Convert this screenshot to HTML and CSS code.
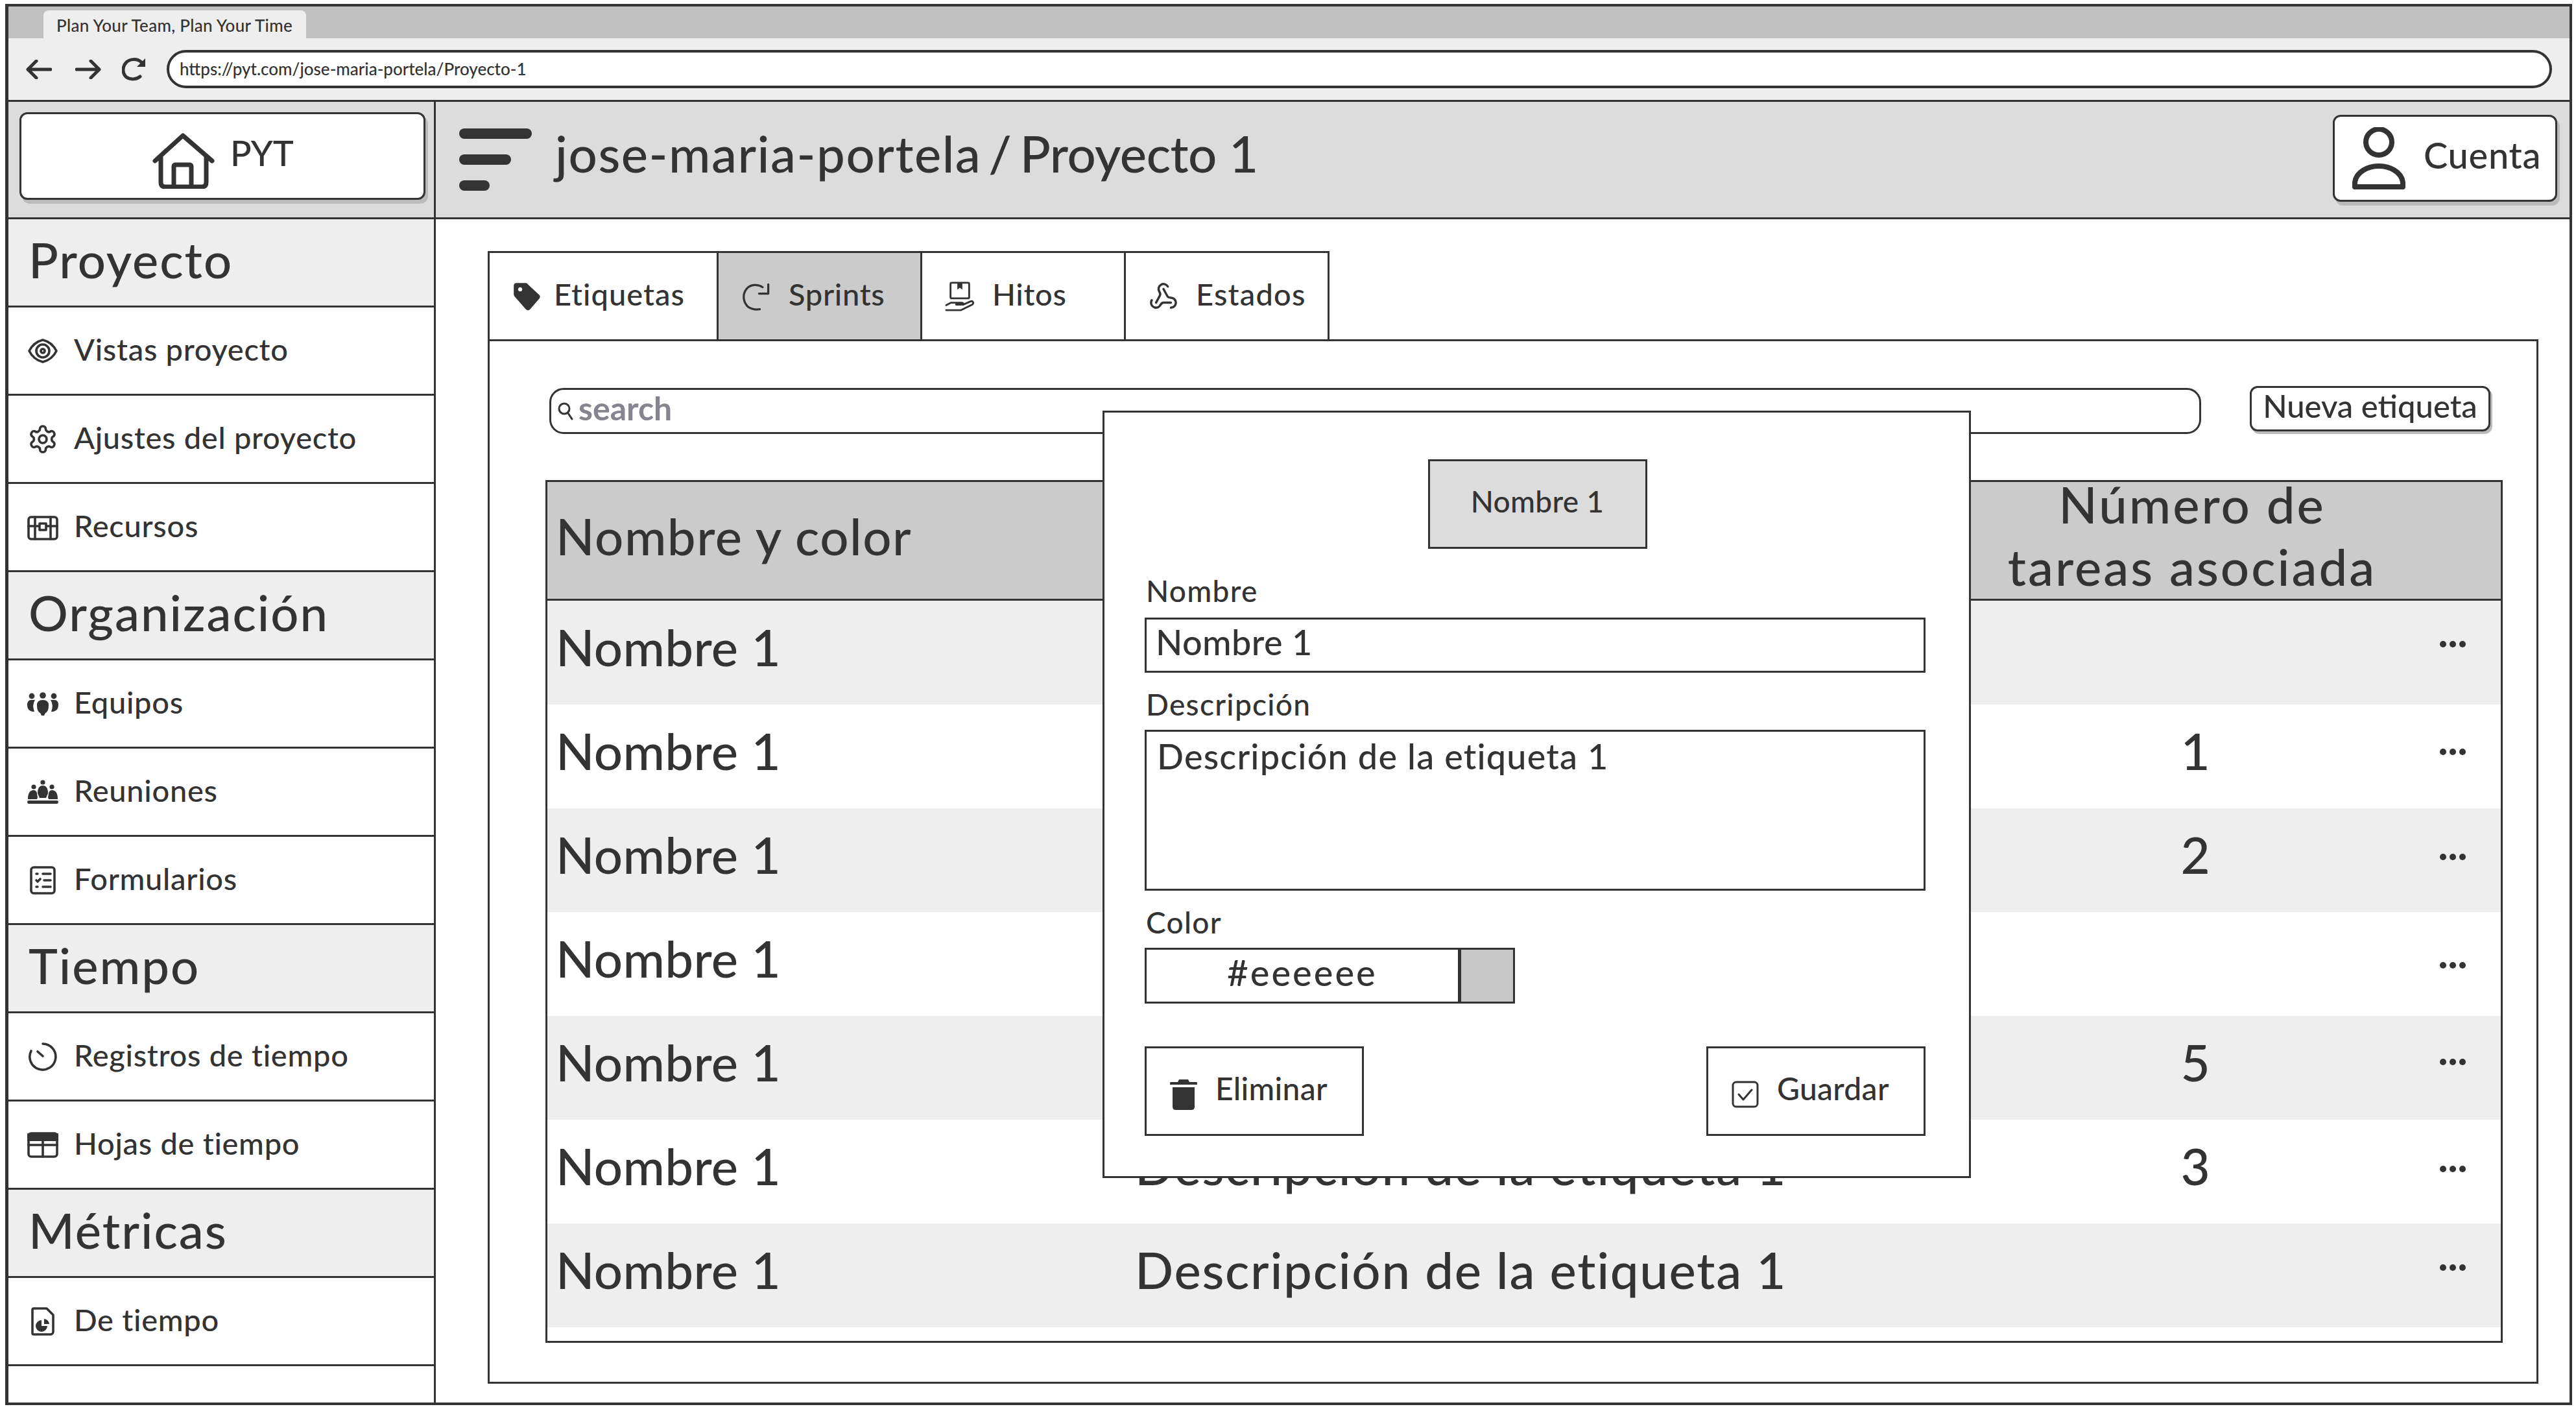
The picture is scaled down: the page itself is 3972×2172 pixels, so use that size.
FILE: index.html
```html
<!DOCTYPE html>
<html lang="es">
<head>
<meta charset="utf-8">
<title>Plan Your Team, Plan Your Time</title>
<link rel="stylesheet" href="styles.css">
</head>
<body>
<div class="window">
  <div class="tabstrip"><div class="browser-tab">Plan Your Team, Plan Your Time</div></div>
  <div class="toolbar">
    <svg class="nav-back" viewBox="0 0 40 30"><path d="M38 15H3M16 2 3 15l13 13"/></svg>
    <svg class="nav-fwd" viewBox="0 0 40 30"><path d="M2 15h35M24 2l13 13-13 13"/></svg>
    <svg class="nav-reload" viewBox="0 0 38 36"><path d="M30 7C24 1 12 1 6 8c-6 7-5 17 1 22 6 4 15 4 21-1"/><path class="solid" d="M36 1v13H23z"/></svg>
    <div class="address">https://pyt.com/jose-maria-portela/Proyecto-1</div>
  </div>
  <div class="app">
    <div class="logo-cell">
      <div class="logo-btn">
        <svg class="home" viewBox="0 0 96 86"><path d="M4 43 47 4l45 39M13 35v41q0 7 7 7h56q7 0 7-7V35M33 83V52q0-3 3-3h21q3 0 3 3v31"/></svg>
        <span class="logo-text">PYT</span>
      </div>
    </div>
    <div class="titlebar">
      <div class="burger"><i class="b1"></i><i class="b2"></i><i class="b3"></i></div>
      <div class="crumb"><span class="crumb-org">jose-maria-portela</span><span class="crumb-sep">/</span><span class="crumb-proj">Proyecto 1</span></div>
      <div class="account">
        <svg class="user" viewBox="0 0 84 96"><circle cx="42" cy="23" r="20"/><path d="M5 92v-7c2-16 20-25 37-25s35 9 37 25v7z"/></svg>
        <span>Cuenta</span>
      </div>
    </div>
    <nav class="sidebar">
      <div class="sec">Proyecto</div>
      <div class="item"><svg class="ico" viewBox="0 0 24 24"><path d="M1.500 12C4 7 8 4.500 12 3.500 16 4.500 20 7 22.500 12 20 17 16 19.500 12 20.500 8 19.500 4 17 1.500 12z"/><circle cx="12" cy="12" r="5"/><circle cx="12" cy="12" r="1.500"/></svg><span>Vistas proyecto</span></div>
      <div class="item"><svg class="ico" viewBox="0 0 24 24"><path d="M12.220 2h-.44a2 2 0 0 0-2 2v.18a2 2 0 0 1-1 1.730l-.43.25a2 2 0 0 1-2 0l-.15-.08a2 2 0 0 0-2.730.73l-.22.38a2 2 0 0 0 .73 2.730l.15.1a2 2 0 0 1 1 1.720v.51a2 2 0 0 1-1 1.740l-.15.09a2 2 0 0 0-.73 2.730l.22.38a2 2 0 0 0 2.730.73l.15-.08a2 2 0 0 1 2 0l.43.25a2 2 0 0 1 1 1.730V20a2 2 0 0 0 2 2h.44a2 2 0 0 0 2-2v-.18a2 2 0 0 1 1-1.730l.43-.25a2 2 0 0 1 2 0l.15.08a2 2 0 0 0 2.730-.73l.22-.39a2 2 0 0 0-.73-2.730l-.15-.08a2 2 0 0 1-1-1.740v-.5a2 2 0 0 1 1-1.740l.15-.09a2 2 0 0 0 .73-2.730l-.22-.38a2 2 0 0 0-2.730-.73l-.15.08a2 2 0 0 1-2 0l-.43-.25a2 2 0 0 1-1-1.730V4a2 2 0 0 0-2-2z"/><circle cx="12" cy="12" r="3"/></svg><span>Ajustes del proyecto</span></div>
      <div class="item"><svg class="ico" viewBox="0 0 24 24"><rect x="1" y="4" width="22" height="17" rx="2"/><path d="M1 11h8M15 11h8M6 4v17M18 4v17"/><rect x="9.500" y="9" width="5" height="5"/></svg><span>Recursos</span></div>
      <div class="sec">Organización</div>
      <div class="item"><svg class="ico" viewBox="0 0 24 24"><g class="solid"><circle cx="3.500" cy="6" r="2.200"/><circle cx="12" cy="5.500" r="2.400"/><circle cx="20.500" cy="6" r="2.200"/><path d="M0 13q0-4 3-4h3q-2.500 4-.5 9H4q-4-1-4-5zM24 13q0-4-3-4h-3q2.500 4 .5 9H20q4-1 4-5zM7.500 13q0-4 4.500-4t4.500 4q0 5-2.500 6l-1 2h-2l-1-2q-2.500-1-2.500-6z"/></g></svg><span>Equipos</span></div>
      <div class="item"><svg class="ico" viewBox="0 0 24 24"><g class="solid"><circle cx="12" cy="4.500" r="1.800"/><circle cx="5" cy="8" r="1.800"/><circle cx="19" cy="8" r="1.800"/><path d="M8 13q0-6 4-6t4 6l-1.500 3.500h-5zM.5 17.500q0-7 4.500-7 1.500 0 2.300 1.500L8 16l-.5 1.500zM23.500 17.500q0-7-4.500-7-1.500 0-2.300 1.500L16 16l.5 1.500z"/><rect y="18.500" width="24" height="2.500" rx="1.200"/></g></svg><span>Reuniones</span></div>
      <div class="item"><svg class="ico" viewBox="0 0 24 24"><rect x="3" y="2" width="18" height="20" rx="2"/><path d="M7 7h1M12 7h6M7 12l1 1 2-2M13 12h5M7 17h1M12 17h6"/></svg><span>Formularios</span></div>
      <div class="sec">Tiempo</div>
      <div class="item"><svg class="ico" viewBox="0 0 24 24"><path d="M12 2a10 10 0 1 1-9 5.500"/><path d="M8 8l4 3.500"/></svg><span>Registros de tiempo</span></div>
      <div class="item"><svg class="ico" viewBox="0 0 24 24"><rect x="1" y="3" width="22" height="18" rx="2"/><path class="thick" d="M1 6h22"/><path d="M1 12h22M12 7v14"/></svg><span>Hojas de tiempo</span></div>
      <div class="sec">Métricas</div>
      <div class="item"><svg class="ico" viewBox="0 0 24 24"><path d="M5 2h10l5 5v13a2 2 0 0 1-2 2H5a1 1 0 0 1-1-1V3a1 1 0 0 1 1-1z"/><path class="solid" d="M11 11v4.500h4.500A4.500 4.500 0 1 1 11 11zM13 10a4.500 4.500 0 0 1 4 4h-4z"/></svg><span>De tiempo</span></div>
    </nav>
    <main class="main">
      <div class="tabs">
        <div class="tab tab-a"><svg class="tab-ico" viewBox="0 0 42 42"><path class="solid" fill-rule="evenodd" d="M2 6q0-4 4-4h13q2 0 3 2l16 15q2 2 0 5L25 39q-3 3-6 0L4 22q-2-2-2-4zM11 8a3 3 0 1 0 .01 0z"/></svg><span>Etiquetas</span></div>
        <div class="tab tab-b active"><svg class="tab-ico" viewBox="0 0 42 42"><path d="M30 8C23 3 12 4 7 11c-6 8-4 19 3 25 5 3 10 4 16 3"/><path d="M38 4v13H25"/></svg><span>Sprints</span></div>
        <div class="tab tab-c"><svg class="tab-ico" viewBox="0 0 48 48"><rect x="9" y="2" width="30" height="25" rx="2"/><path class="solid" d="M20 2h8v11l-4-3-4 3z"/><path d="M2 46h24l18-9c3-2 1-7-3-5l-11 5H18M2 38l8-4h16q4 0 4 3"/></svg><span>Hitos</span></div>
        <div class="tab tab-d"><svg class="tab-ico" viewBox="0 0 24 24"><path d="M18 16.980h-5.990c-1.100 0-1.950.94-2.480 1.900A4 4 0 0 1 2 17c.01-.7.2-1.400.57-2"/><path d="m6 17 3.130-5.780c.53-.97.1-2.180-.5-3.100a4 4 0 1 1 6.890-4.060"/><path d="m12 6 3.130 5.730C15.660 12.700 16.900 13 18 13a4 4 0 0 1 0 8"/></svg><span>Estados</span></div>
      </div>
      <section class="panel">
        <div class="panel-top">
          <div class="search">
            <svg class="search-ico" viewBox="0 0 24 30"><circle cx="10" cy="11" r="8"/><path d="m16 18 6 9"/></svg>
            <span>search</span>
          </div>
          <div class="new-btn">Nueva etiqueta</div>
        </div>
        <div class="table">
          <div class="row head"><div class="c1">Nombre y color</div><div class="c2">Descripción</div><div class="c3">Número de<br>tareas asociada</div><div class="c4"></div></div>
          <div class="row odd r1"><div class="c1">Nombre 1</div><div class="c2">Descripción de la etiqueta 1</div><div class="c3"></div><div class="c4"><span class="dots"><i></i><i></i><i></i></span></div></div>
          <div class="row r2"><div class="c1">Nombre 1</div><div class="c2">Descripción de la etiqueta 1</div><div class="c3">1</div><div class="c4"><span class="dots"><i></i><i></i><i></i></span></div></div>
          <div class="row odd r3"><div class="c1">Nombre 1</div><div class="c2">Descripción de la etiqueta 1</div><div class="c3">2</div><div class="c4"><span class="dots"><i></i><i></i><i></i></span></div></div>
          <div class="row r4"><div class="c1">Nombre 1</div><div class="c2">Descripción de la etiqueta 1</div><div class="c3"></div><div class="c4"><span class="dots"><i></i><i></i><i></i></span></div></div>
          <div class="row odd r5"><div class="c1">Nombre 1</div><div class="c2">Descripción de la etiqueta 1</div><div class="c3">5</div><div class="c4"><span class="dots"><i></i><i></i><i></i></span></div></div>
          <div class="row r6"><div class="c1">Nombre 1</div><div class="c2">Descripción de la etiqueta 1</div><div class="c3">3</div><div class="c4"><span class="dots"><i></i><i></i><i></i></span></div></div>
          <div class="row odd r7"><div class="c1">Nombre 1</div><div class="c2">Descripción de la etiqueta 1</div><div class="c3"></div><div class="c4"><span class="dots"><i></i><i></i><i></i></span></div></div>
        </div>
      </section>
      <div class="modal">
        <div class="chip">Nombre 1</div>
        <div class="label label-first">Nombre</div>
        <div class="field field-name">Nombre 1</div>
        <div class="label">Descripción</div>
        <div class="field field-desc">Descripción de la etiqueta 1</div>
        <div class="label">Color</div>
        <div class="color">
          <div class="color-value">#eeeeee</div>
          <div class="color-swatch"></div>
        </div>
        <div class="actions">
          <div class="action act-del"><svg class="trash" viewBox="0 0 42 48"><path class="solid" d="M14 1h14l2 4h11q1 0 1 2v2H0V7q0-2 1-2h11zM4 13h34v30q0 5-5 5H9q-5 0-5-5z"/></svg><span>Eliminar</span></div>
          <div class="action act-save"><svg class="check" viewBox="0 0 42 42"><rect x="2" y="2" width="38" height="38" rx="5"/><path d="m11 21 7 8 13-15"/></svg><span>Guardar</span></div>
        </div>
      </div>
    </main>
  </div>
</div>
</body>
</html>
```
FILE: styles.css
```css
* { box-sizing: border-box; }
html, body { margin: 0; padding: 0; background: #fff; }
body { font-family: Lato, "Noto Sans", sans-serif; font-weight: 500; color: #333; overflow: hidden; }
svg { display: block; flex: none; fill: none; stroke: #333; stroke-linecap: round; stroke-linejoin: round; }
svg .solid { fill: #333; stroke: none; }

.window { width: 3958px; height: 2160px; margin: 6px 6px 6px 8px; border: 4px solid #333; border-left-width: 5px; display: flex; flex-direction: column; background: #fff; }

.tabstrip { height: 49px; flex: none; background: #c0c0c0; padding: 6px 0 0 54px; }
.browser-tab { width: 405px; height: 43px; background: #eee; border-radius: 8px 8px 0 0; font-size: 26px; letter-spacing: 0.300px; line-height: 46px; padding-left: 20px; white-space: nowrap; }

.toolbar { height: 95px; flex: none; background: #eee; display: flex; align-items: center; padding-left: 27px; padding-right: 27px; }
.nav-back { width: 40px; height: 30px; stroke-width: 5; }
.nav-fwd { width: 40px; height: 30px; stroke-width: 5; margin-left: 36px; }
.nav-reload { width: 38px; height: 36px; stroke-width: 5; margin-left: 32px; }
.address { flex: 1; height: 59px; margin-left: 31px; background: #fff; border: 4px solid #333; border-radius: 30px; font-size: 26px; line-height: 51px; padding-left: 16px; }

.app { flex: 1; display: grid; grid-template-columns: 659px 1fr; grid-template-rows: 184px 1fr; min-height: 0; }

.logo-cell { background: #dcdcdc; border-top: 3px solid #333; border-bottom: 3px solid #333; border-right: 3px solid #333; padding: 16px 13px 0 17px; }
.logo-btn { height: 135px; background: #fff; border: 3px solid #333; border-radius: 12px; box-shadow: 4px 6px 0 #bbb; display: flex; align-items: center; padding-left: 202px; gap: 24px; }
.home { width: 96px; height: 86px; stroke-width: 7; margin-top: 14px; }
.logo-text { font-size: 54px; line-height: 1; margin-top: -10px; }

.titlebar { background: #dcdcdc; border-top: 3px solid #333; border-bottom: 3px solid #333; display: flex; align-items: center; padding-left: 36px; padding-right: 19px; }
.burger { display: flex; flex-direction: column; gap: 24px; width: 112px; flex: none; }
.burger i { display: block; height: 16px; background: #333; border-radius: 8px; }
.burger .b1 { width: 112px; }
.burger .b2 { width: 80px; }
.burger .b3 { width: 47px; }
.crumb { font-size: 78px; line-height: 1; margin-left: 36px; flex: 1; white-space: nowrap; margin-top: -20px; display: flex; }
.crumb-org { letter-spacing: 1.500px; }
.crumb-sep { margin: 0 13px 0 11px; }
.crumb-proj { letter-spacing: -0.500px; }
.account { width: 346px; height: 134px; margin-top: -5px; background: #fff; border: 3px solid #333; border-radius: 12px; box-shadow: 4px 6px 0 #bbb; display: flex; align-items: center; padding-left: 26px; gap: 27px; font-size: 56px; letter-spacing: 0.700px; }
.account span { margin-top: -10px; }
.user { width: 84px; height: 96px; stroke-width: 8; }

.sidebar { border-right: 3px solid #333; display: flex; flex-direction: column; }
.sec, .item { height: 136px; flex: none; border-bottom: 3px solid #333; display: flex; align-items: center; }
.sec { background: #eee; font-size: 76px; letter-spacing: 2px; padding-left: 31px; padding-bottom: 10px; }
.item { font-size: 47px; letter-spacing: 0.700px; padding-left: 29px; gap: 24px; }
.item span { margin-top: -6px; }
.ico { width: 48px; height: 48px; stroke-width: 1.800; }
.ico .thick { stroke-width: 6; }

.main { position: relative; display: flex; flex-direction: column; padding: 49px 48px 29px 80px; min-width: 0; }
.tabs { display: flex; height: 136px; flex: none; }
.tab { height: 136px; background: #fff; border: 3px solid #333; border-bottom-width: 0; border-left-width: 0; display: flex; align-items: center; gap: 27px; padding-left: 35px; font-size: 47px; letter-spacing: 0.700px; }
.tab span { margin-top: -8px; }
.tab-a { width: 356px; border-left-width: 3px; gap: 18px; letter-spacing: 1px; }
.tab-b { width: 314px; }
.tab-c { width: 314px; }
.tab-d { width: 314px; letter-spacing: 1.200px; }
.tab.active { background: #cbcbcb; }
.tab-ico { width: 46px; height: 46px; stroke-width: 3; }
.tab-d .tab-ico { stroke-width: 1.800; }

.panel { flex: 1; border: 3px solid #333; padding: 69px 52px 0 86px; min-height: 0; }
.panel-top { display: flex; align-items: flex-start; height: 75px; gap: 75px; padding-right: 19px; }
.search { flex: 1; height: 71px; margin-top: 3px; margin-left: 6px; border: 3px solid #333; border-radius: 22px; background: #fff; display: flex; align-items: center; padding-left: 10px; gap: 8px; font-size: 50px; color: #85858f; font-weight: 700; }
.search span { margin-top: -10px; }
.search-ico { width: 24px; height: 30px; stroke-width: 3; }
.new-btn { width: 371px; height: 70px; background: #fff; border: 3px solid #333; border-radius: 12px; box-shadow: 3px 4px 0 #bbb; font-size: 49px; line-height: 54px; text-align: center; white-space: nowrap; }

.table { margin-top: 70px; border: 3px solid #333; padding-bottom: 21px; }
.row { display: grid; grid-template-columns: 888px 1358px 590px 1fr; height: 160px; align-items: center; font-size: 78px; white-space: nowrap; }
.row.odd { background: #eee; }
.row.head { height: 183px; background: #cbcbcb; border-bottom: 3px solid #333; }
.c1 { padding-left: 13px; margin-top: -18px; letter-spacing: 0.300px; }
.c2 { padding-left: 18px; margin-top: -18px; letter-spacing: 1.700px; }
.c3 { text-align: center; margin-top: -18px; }
.head .c1 { letter-spacing: 1.500px; margin-top: -14px; }
.head .c2 { margin-top: -14px; }
.head .c3 { line-height: 96px; letter-spacing: 3px; margin-top: -16px; padding-right: 10px; }
.c4 { padding-left: 82px; }
.dots { display: flex; gap: 5px; width: 40px; }
.dots i { width: 10px; height: 10px; border-radius: 50%; background: #333; flex: none; }
.r1 .dots { transform: translateY(-13px); }
.r2 .dots { transform: translateY(-7px); }
.r3 .dots { transform: translateY(-5px); }
.r4 .dots { transform: translateY(2px); }
.r5 .dots { transform: translateY(-9px); }
.r6 .dots { transform: translateY(-4px); }
.r7 .dots { transform: translateY(-12px); }

.modal { position: absolute; left: 1028px; top: 295px; width: 1339px; height: 1183px; background: #fff; border: 3px solid #333; padding: 72px 67px 0 62px; display: flex; flex-direction: column; }
.chip { align-self: center; width: 338px; height: 138px; margin-left: 7px; background: #dcdcdc; border: 3px solid #333; font-size: 46px; letter-spacing: 0.300px; line-height: 124px; text-align: center; }
.label { font-size: 46px; line-height: 46px; letter-spacing: 1.300px; margin-top: 26px; margin-bottom: 16px; padding-left: 2px; }
.label-first { margin-top: 42px; margin-bottom: 18px; }
.field { border: 3px solid #333; background: #fff; font-size: 54px; padding-left: 14px; }
.field-name { height: 85px; line-height: 70px; letter-spacing: 0.400px; }
.field-desc { height: 248px; line-height: 76px; padding-left: 16px; letter-spacing: 1.200px; }
.color { display: flex; height: 86px; width: 571px; border: 3px solid #333; }
.color-value { width: 485px; font-size: 56px; line-height: 70px; letter-spacing: 3px; text-align: center; border-right: 5px solid #333; }
.color-swatch { flex: 1; background: #c6c6c6; }
.actions { display: flex; justify-content: space-between; margin-top: 66px; }
.action { width: 338px; height: 138px; border: 3px solid #333; display: flex; align-items: center; font-size: 48px; letter-spacing: 0.300px; padding-left: 36px; gap: 28px; }
.action span { margin-top: -10px; }
.trash { width: 42px; height: 48px; margin-top: 10px; }
.check { width: 42px; height: 42px; stroke-width: 3; margin-top: 10px; }
```
